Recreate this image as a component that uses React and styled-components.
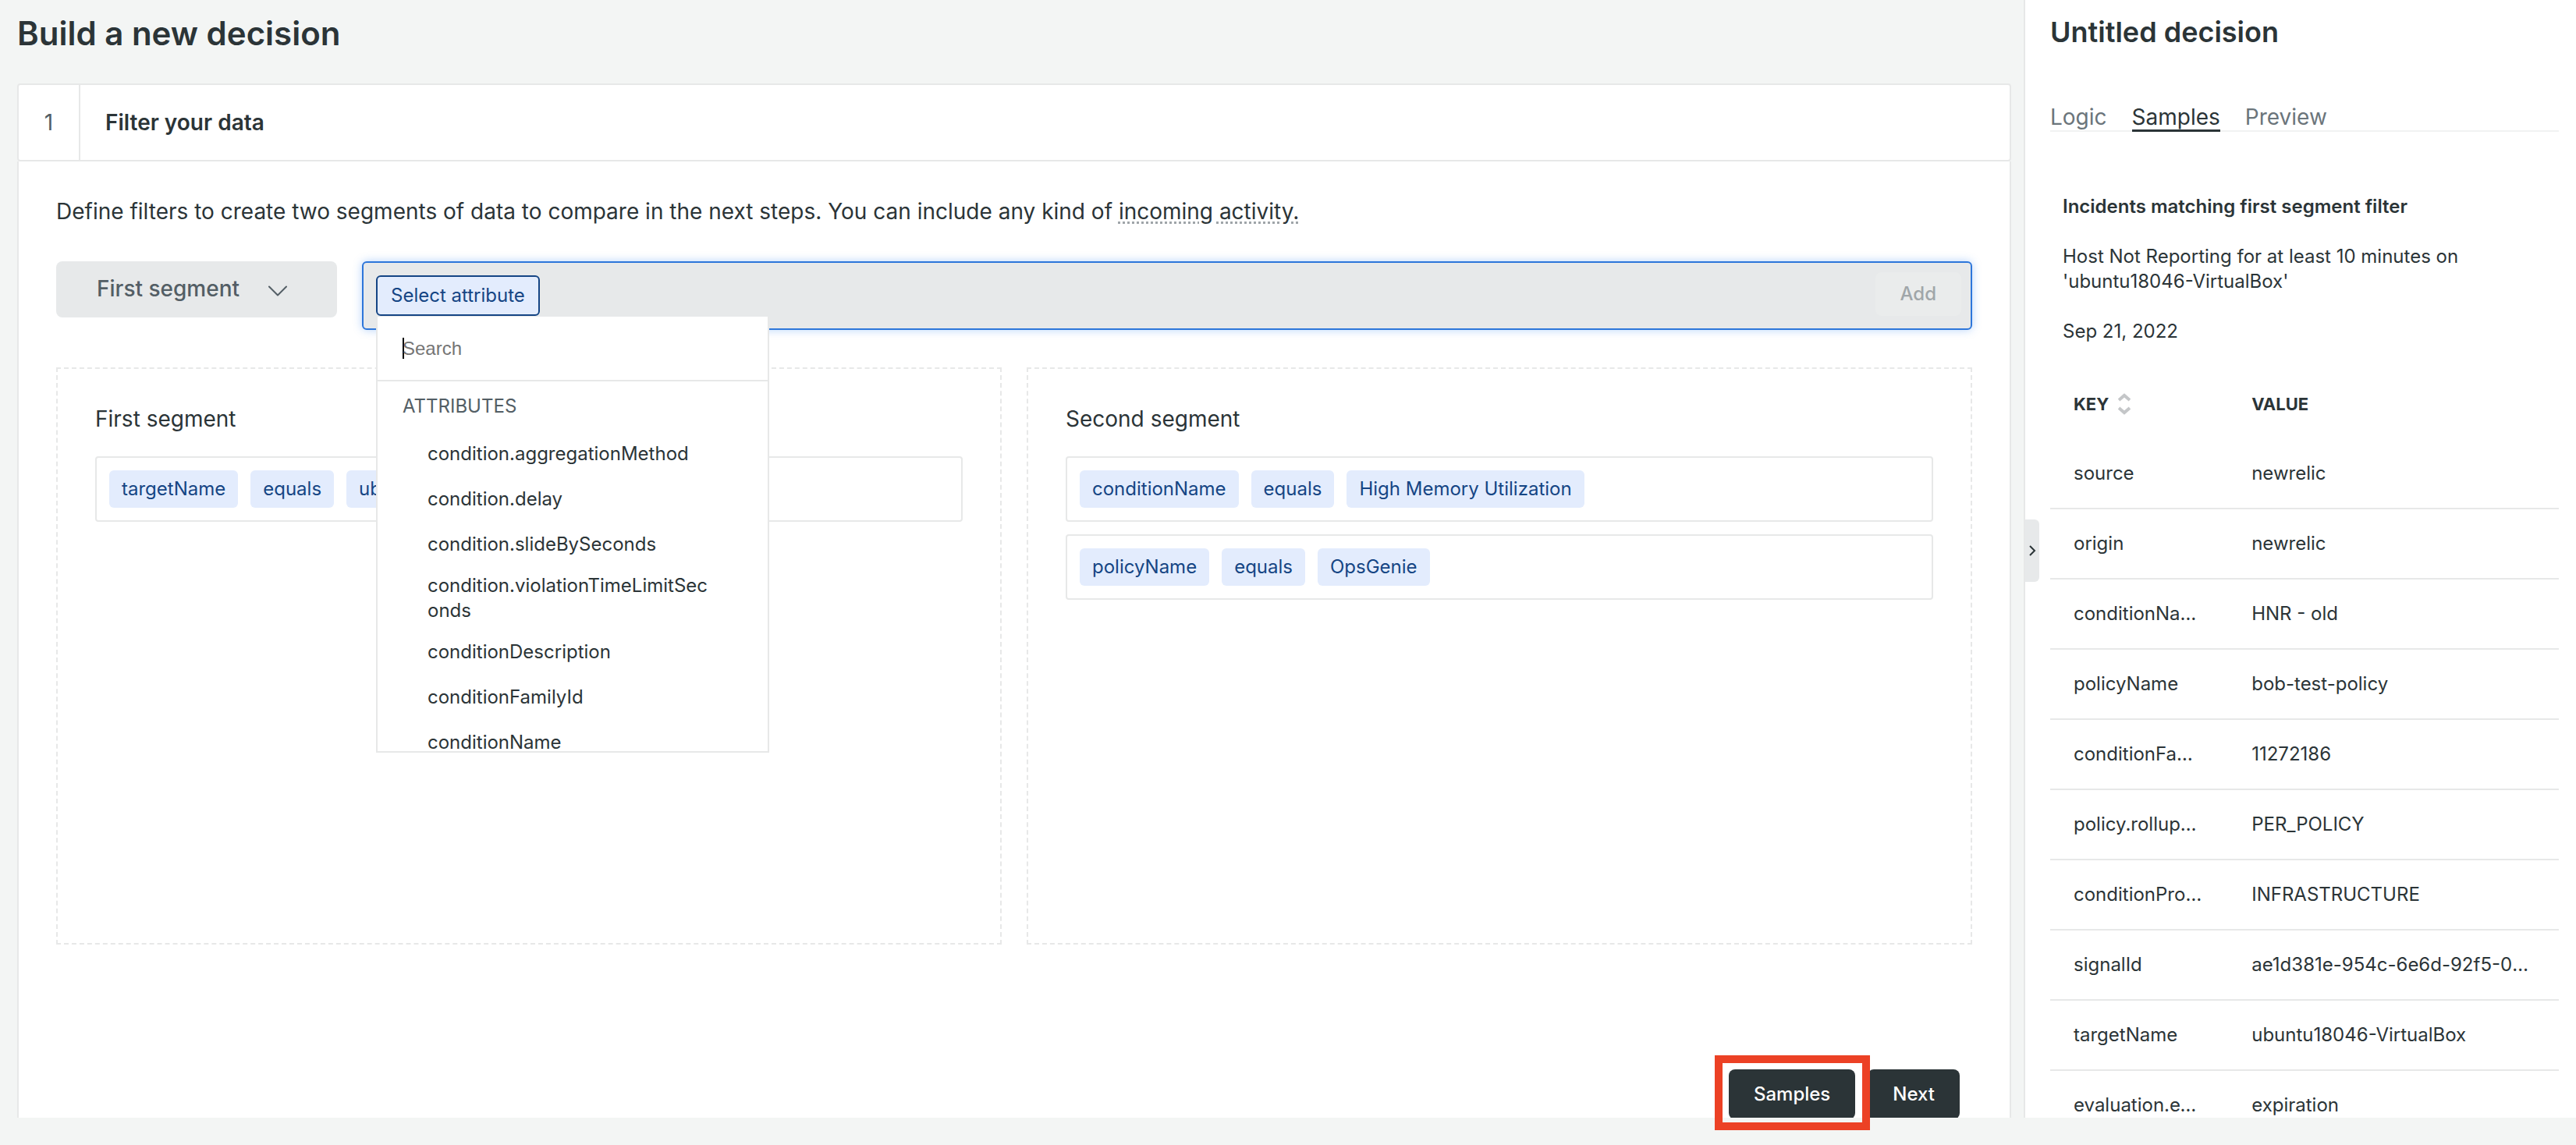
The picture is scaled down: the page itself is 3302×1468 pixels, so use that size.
import React from "react";
import styled, { createGlobalStyle, css } from "styled-components";

const ink = "#2b3437";
const muted = "#535e65";
const line = "#e7e8e8";
const page = "#f3f5f4";
const grey = "#e7e9ea";
const chipBg = "#e3ecfd";
const chipInk = "#154584";

const GlobalStyle = createGlobalStyle`
  *, *::before, *::after { box-sizing: border-box; }
  body {
    margin: 0;
    background: ${page};
    color: ${ink};
    font-family: Inter, "Liberation Sans", sans-serif;
    font-size: 24px;
    line-height: 32px;
  }
  h1, h2, h3, p, ul { margin: 0; padding: 0; }
  button, input, select { font: inherit; color: inherit; margin: 0; }
`;

const Shell = styled.div`
  height: 100vh;
  overflow: hidden;
  display: grid;
  grid-template-columns: minmax(0, 1fr) 708px;
  grid-template-rows: minmax(0, 1fr) 35px;
`;

const Main = styled.main`
  display: flex;
  flex-direction: column;
  padding: 15px 16px 0 22px;
  min-height: 0;
`;

const Footer = styled.footer`
  grid-column: 1 / -1;
  position: relative;
  z-index: 1;
  background: ${page};
`;

const PageTitle = styled.h1`
  font-size: 42px;
  line-height: 56px;
  font-weight: 600;
  margin-bottom: 36px;
`;

const StepHeader = styled.header`
  display: flex;
  flex: none;
  height: 100px;
  background: #fff;
  border: 2px solid ${line};
  border-radius: 4px;
`;

const StepNumber = styled.div`
  display: flex;
  align-items: center;
  justify-content: center;
  width: 79px;
  border-right: 2px solid ${line};
  font-size: 28px;
  color: ${muted};
`;

const StepTitle = styled.h2`
  display: flex;
  align-items: center;
  padding-left: 32px;
  font-size: 28px;
  font-weight: 600;
`;

const StepBody = styled.section`
  flex: 1;
  min-height: 0;
  background: #fff;
  border: solid ${line};
  border-width: 0 2px;
  padding: 48px 48px 0;
`;

const Intro = styled.p`
  font-size: 28px;
  line-height: 32px;
  margin-bottom: 48px;
`;

const DottedLink = styled.a`
  color: inherit;
  text-decoration: underline dotted #9fa5a9 3px;
  text-underline-offset: 3px;
`;

const Controls = styled.div`
  display: flex;
  align-items: flex-start;
  gap: 32px;
  margin-bottom: 48px;
`;

const SegmentPicker = styled.label`
  position: relative;
  flex: none;
  width: 360px;
  color: ${muted};

  svg {
    position: absolute;
    right: 64px;
    top: 30px;
    pointer-events: none;
  }
`;

const SegmentSelect = styled.select`
  appearance: none;
  display: block;
  width: 100%;
  height: 72px;
  padding: 0 52px 2px;
  border: 0;
  border-radius: 8px;
  background: ${grey};
  font-size: 28px;
  font-weight: 500;
`;

const FilterBar = styled.div`
  flex: 1;
  display: flex;
  align-items: flex-start;
  justify-content: space-between;
  height: 88px;
  padding: 12px 12px 0 16px;
  border: 2px solid #2d76da;
  border-radius: 6px;
  background: ${grey};
  box-shadow: 0 0 12px rgba(45, 130, 240, 0.35);
`;

const AttributePicker = styled.div`
  position: relative;
  padding-top: 4px;
`;

const AttributeButton = styled.button`
  display: block;
  height: 52px;
  padding: 0 17px;
  border: 2px solid ${chipInk};
  border-radius: 6px;
  background: ${chipBg};
  color: ${chipInk};
`;

const AddButton = styled.button`
  height: 56px;
  padding: 0 32px;
  border: 0;
  border-radius: 8px;
  background: #eaecec;
  color: #a0a6a9;
  font-weight: 500;
`;

const Menu = styled.div`
  position: absolute;
  z-index: 3;
  top: 57px;
  left: 0;
  width: 504px;
  height: 559px;
  overflow: hidden;
  background: #fff;
  border: 2px solid ${line};
  border-top-width: 0;
`;

const SearchField = styled.label`
  display: flex;
  align-items: center;
  height: 83px;
  padding: 0 32px;
  border-bottom: 2px solid ${line};

  &::before {
    content: "";
    width: 2px;
    height: 27px;
    margin-right: -2px;
    background: #000;
  }
`;

const SearchInput = styled.input`
  width: 100%;
  border: 0;
  padding: 0;
  outline: 0;
  background: transparent;
  font-family: "Liberation Sans", Arial, sans-serif;

  &::placeholder {
    color: #757575;
    opacity: 1;
  }
`;

const MenuHeading = styled.h3`
  padding: 16px 32px;
  font-size: 24px;
  font-weight: 400;
  text-transform: uppercase;
  color: ${muted};
`;

const MenuList = styled.ul`
  list-style: none;
`;

const MenuItem = styled.li`
  display: flex;
  align-items: center;
  min-height: 58px;
  padding: 8px 72px 8px 64px;
  word-break: break-all;
`;

const Segments = styled.div`
  display: grid;
  grid-template-columns: 1fr 1fr;
  gap: 32px;
  margin-bottom: 160px;
`;

const Segment = styled.section`
  display: flex;
  flex-direction: column;
  gap: 16px;
  min-height: 740px;
  padding: 48px;
  border: 2px dashed ${line};
`;

const SegmentTitle = styled.h3`
  margin-bottom: 16px;
  font-size: 28px;
  font-weight: 400;
`;

const FilterRow = styled.div`
  display: flex;
  gap: 16px;
  padding: 16px;
  border: 2px solid ${line};
  border-radius: 4px;
`;

const Chip = styled.span`
  padding: 8px 16px;
  border-radius: 6px;
  background: ${chipBg};
  color: ${chipInk};
`;

const Actions = styled.div`
  display: flex;
  justify-content: flex-end;
  gap: 16px;
  padding-right: 16px;
`;

const DarkButton = styled.button`
  height: 64px;
  padding: 0 32px;
  border: 0;
  border-radius: 8px;
  background: ${ink};
  color: #fff;
  font-weight: 500;
`;

const Highlight = styled.div`
  position: relative;

  &::after {
    content: "";
    position: absolute;
    z-index: 2;
    inset: -18px -19px -14px -18px;
    border: 10px solid #ec4125;
    pointer-events: none;
  }
`;

const Sidebar = styled.aside`
  position: relative;
  min-height: 0;
  padding: 17px 22px 0 32px;
  background: #fff;
  border-left: 2px solid ${line};
`;

const SidebarTitle = styled.h2`
  font-size: 36px;
  line-height: 48px;
  font-weight: 600;
  margin-bottom: 68px;
`;

const CollapseHandle = styled.button`
  position: absolute;
  left: 0;
  top: 666px;
  display: flex;
  align-items: center;
  justify-content: center;
  width: 18px;
  height: 80px;
  padding: 0;
  border: 0;
  border-radius: 0 6px 6px 0;
  background: ${grey};
`;

const Tabs = styled.nav`
  display: flex;
  gap: 32px;
  box-shadow: inset 0 -2px #f1f2f2;
  margin-bottom: 80px;
`;

const Tab = styled.button`
  height: 36px;
  padding: 0;
  border: 0;
  background: none;
  font-size: 28px;
  line-height: 32px;
  color: #6b757b;
  border-bottom: 3px solid transparent;
  ${(p) =>
    p.$active &&
    css`
      color: ${ink};
      border-color: ${ink};
    `}
`;

const Summary = styled.div`
  display: flex;
  flex-direction: column;
  gap: 32px;
  padding: 0 100px 0 16px;
  margin-bottom: 32px;
`;

const SummaryTitle = styled.h3`
  font-size: 24px;
  font-weight: 600;
`;

const DataTable = styled.table`
  width: 100%;
  table-layout: fixed;
  border-collapse: separate;
  border-spacing: 0;
`;

const HeadCell = styled.th`
  width: ${(p) => p.$width};
  height: 90px;
  padding: 0 30px;
  text-align: left;
  text-transform: uppercase;
  font-size: 22px;
  font-weight: 700;
`;

const SortLabel = styled.span`
  display: flex;
  align-items: center;
  gap: 12px;
`;

const Cell = styled.td`
  height: 90px;
  padding: 0 30px;
  border-bottom: 2px solid ${line};
  overflow: hidden;
  text-overflow: ellipsis;
  white-space: nowrap;
`;

const attributes = [
  "condition.aggregationMethod",
  "condition.delay",
  "condition.slideBySeconds",
  "condition.violationTimeLimitSeconds",
  "conditionDescription",
  "conditionFamilyId",
  "conditionName",
];

const segments = [
  {
    title: "First segment",
    filters: [["targetName", "equals", "ubuntu18046-VirtualBox"]],
  },
  {
    title: "Second segment",
    filters: [
      ["conditionName", "equals", "High Memory Utilization"],
      ["policyName", "equals", "OpsGenie"],
    ],
  },
];

const rows = [
  ["source", "newrelic"],
  ["origin", "newrelic"],
  ["conditionName", "HNR - old"],
  ["policyName", "bob-test-policy"],
  ["conditionFamilyId", "11272186"],
  ["policy.rollupStrategy", "PER_POLICY"],
  ["conditionProduct", "INFRASTRUCTURE"],
  ["signalId", "ae1d381e-954c-6e6d-92f5-0a1b2c3d4e5f"],
  ["targetName", "ubuntu18046-VirtualBox"],
  ["evaluation.event", "expiration"],
];

export default function App() {
  return (
    <>
      <GlobalStyle />
      <Shell>
        <Main>
          <PageTitle>Build a new decision</PageTitle>
          <StepHeader>
            <StepNumber>1</StepNumber>
            <StepTitle>Filter your data</StepTitle>
          </StepHeader>
          <StepBody>
            <Intro>
              Define filters to create two segments of data to compare in the
              next steps. You can include any kind of{" "}
              <DottedLink href="#activity">incoming activity.</DottedLink>
            </Intro>
            <Controls>
              <SegmentPicker>
                <SegmentSelect aria-label="Segment" defaultValue="first">
                  <option value="first">First segment</option>
                  <option value="second">Second segment</option>
                </SegmentSelect>
                <svg width="26" height="16" viewBox="0 0 26 16" fill="none" stroke="currentColor" strokeWidth="2" strokeLinecap="round" strokeLinejoin="round">
                  <path d="M3 2.500l11 11 11-11" />
                </svg>
              </SegmentPicker>
              <FilterBar>
                <AttributePicker>
                  <AttributeButton type="button">Select attribute</AttributeButton>
                  <Menu>
                    <SearchField>
                      <SearchInput type="text" placeholder="Search" aria-label="Search" />
                    </SearchField>
                    <MenuHeading>Attributes</MenuHeading>
                    <MenuList>
                      {attributes.map((name) => (
                        <MenuItem key={name}>{name}</MenuItem>
                      ))}
                    </MenuList>
                  </Menu>
                </AttributePicker>
                <AddButton type="button">Add</AddButton>
              </FilterBar>
            </Controls>
            <Segments>
              {segments.map((segment) => (
                <Segment key={segment.title}>
                  <SegmentTitle>{segment.title}</SegmentTitle>
                  {segment.filters.map((filter) => (
                    <FilterRow key={filter[0]}>
                      {filter.map((part) => (
                        <Chip key={part}>{part}</Chip>
                      ))}
                    </FilterRow>
                  ))}
                </Segment>
              ))}
            </Segments>
            <Actions>
              <Highlight>
                <DarkButton type="button">Samples</DarkButton>
              </Highlight>
              <DarkButton type="button">Next</DarkButton>
            </Actions>
          </StepBody>
        </Main>
        <Sidebar>
          <CollapseHandle type="button" aria-label="Collapse panel">
            <svg width="10" height="16" viewBox="0 0 10 16" fill="none" stroke="currentColor" strokeWidth="2">
              <path d="M2 2l6 6-6 6" />
            </svg>
          </CollapseHandle>
          <SidebarTitle>Untitled decision</SidebarTitle>
          <Tabs>
            <Tab type="button">Logic</Tab>
            <Tab type="button" $active>Samples</Tab>
            <Tab type="button">Preview</Tab>
          </Tabs>
          <Summary>
            <SummaryTitle>Incidents matching first segment filter</SummaryTitle>
            <p>Host Not Reporting for at least 10 minutes on 'ubuntu18046-VirtualBox'</p>
            <p>Sep 21, 2022</p>
          </Summary>
          <DataTable>
            <thead>
              <tr>
                <HeadCell $width="35%">
                  <SortLabel>
                    Key
                    <svg width="16" height="28" viewBox="0 0 16 28" fill="none" stroke="#c4c6c8" strokeWidth="4">
                      <path d="M1 9l7-6 7 6M1 19l7 6 7-6" />
                    </svg>
                  </SortLabel>
                </HeadCell>
                <HeadCell>Value</HeadCell>
              </tr>
            </thead>
            <tbody>
              {rows.map(([key, value]) => (
                <tr key={key}>
                  <Cell>{key}</Cell>
                  <Cell>{value}</Cell>
                </tr>
              ))}
            </tbody>
          </DataTable>
        </Sidebar>
        <Footer />
      </Shell>
    </>
  );
}
